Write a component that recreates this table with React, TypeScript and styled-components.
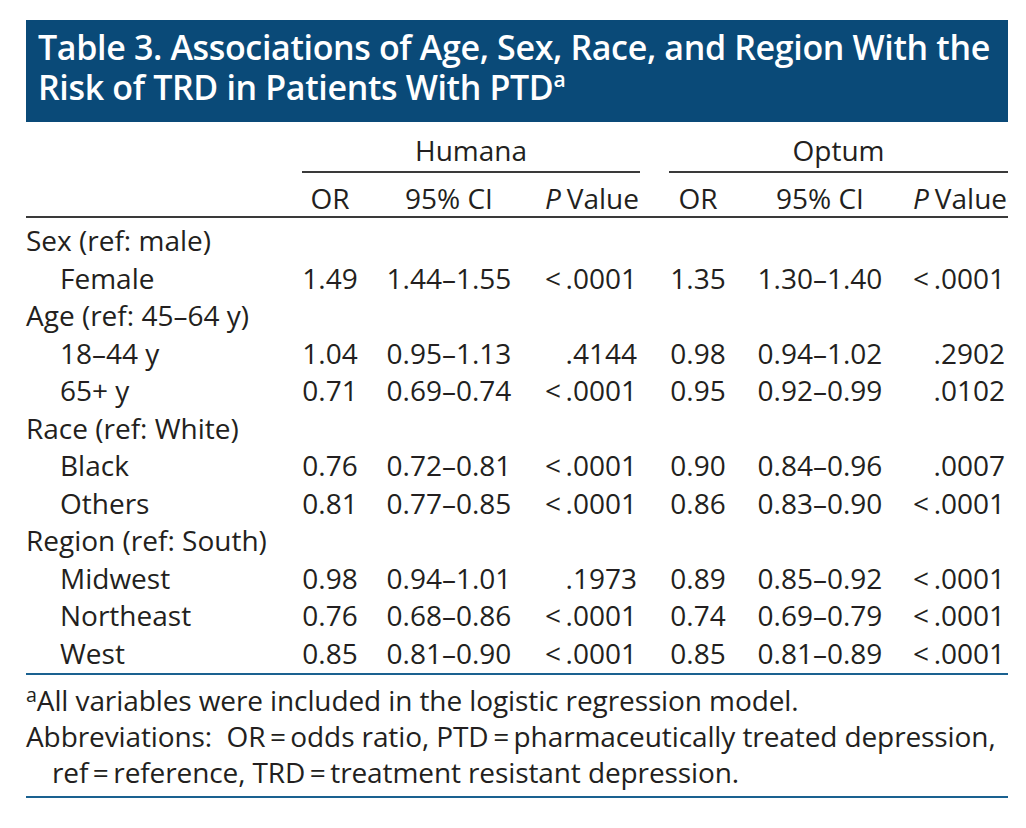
import React from "react";
import styled, { createGlobalStyle } from "styled-components";

const GlobalStyle = createGlobalStyle`
  html, body {
    margin: 0;
    padding: 0;
    background: #ffffff;
  }
  body {
    font-family: "Open Sans", "Noto Sans", "Liberation Sans", sans-serif;
    color: #231f20;
  }
`;

const COLS = "276px 56px 182px 100px 29px 58px 186px 95px";
const INK = "#231f20";
const RULE = "#3a3a3a";
const BLUE = "#1a6190";
const BODY_SIZE = "28px";

const Wrapper = styled.div`
  width: 982px;
  margin: 20px 0 0 26px;
  display: flex;
  flex-direction: column;
`;

const TitleBar = styled.div`
  background: #0a4a78;
  color: #ffffff;
  padding: 7px 0 15px 12px;
  font-weight: 600;
  font-size: 34px;
  line-height: 40px;
  letter-spacing: -0.35px;
`;

const TitleLine = styled.div`
  white-space: nowrap;
`;

const Sup = styled.sup`
  font-size: 0.62em;
  line-height: 0;
  vertical-align: 0.62em;
  font-weight: inherit;
`;

const Row = styled.div<{ $pt?: number; $rule?: boolean }>`
  display: grid;
  grid-template-columns: ${COLS};
  padding-top: ${(p) => p.$pt ?? 0}px;
  font-size: ${BODY_SIZE};
  line-height: 36px;
  color: ${INK};
  border-bottom: ${(p) => (p.$rule ? `2px solid ${RULE}` : "none")};
`;

const GroupHead = styled.div<{ $start: number }>`
  grid-column: ${(p) => p.$start} / span 3;
  text-align: center;
  padding-bottom: 3px;
  border-bottom: 2px solid ${RULE};
`;

const ColHead = styled.div<{ $col: number; $align?: "left" | "center" | "right" }>`
  grid-column: ${(p) => p.$col};
  text-align: ${(p) => p.$align ?? "center"};
  white-space: nowrap;
  padding-right: ${(p) => (p.$align === "right" ? 1 : 0)}px;
`;

const Body = styled.div`
  display: grid;
  grid-template-columns: ${COLS};
  grid-auto-rows: 37.5px;
  padding: 4px 0 1px;
  border-bottom: 2px solid ${BLUE};
  font-size: ${BODY_SIZE};
  line-height: 37.5px;
  color: ${INK};
`;

const Section = styled.div`
  grid-column: 1 / -1;
  white-space: nowrap;
`;

const Label = styled.div`
  grid-column: 1;
  padding-left: 34px;
  white-space: nowrap;
`;

const Cell = styled.div<{ $col: number; $align?: "center" | "right" }>`
  grid-column: ${(p) => p.$col};
  text-align: ${(p) => p.$align ?? "center"};
  white-space: nowrap;
  padding-right: ${(p) => (p.$align === "right" ? 3 : 0)}px;
`;

const Notes = styled.div`
  padding: 7px 0 6px;
  border-bottom: 2px solid ${BLUE};
  font-size: ${BODY_SIZE};
  line-height: 36px;
  color: ${INK};
`;

const NoteLine = styled.div<{ $hang?: boolean }>`
  padding-left: ${(p) => (p.$hang ? 26 : 0)}px;
  white-space: nowrap;
  letter-spacing: -0.1px;
`;

const NoteSup = styled.sup`
  font-size: 0.7em;
  line-height: 0;
  vertical-align: 0.45em;
`;

const Italic = styled.i`
  font-style: italic;
  margin-right: 6px;
`;

type Stat = [string, string, string];
type DataRow = { label: string; h: Stat; o: Stat };
type Group = { title: string; rows: DataRow[] };

const LT = "<\u2009.0001";

const groups: Group[] = [
  {
    title: "Sex (ref: male)",
    rows: [{ label: "Female", h: ["1.49", "1.44–1.55", LT], o: ["1.35", "1.30–1.40", LT] }],
  },
  {
    title: "Age (ref: 45–64 y)",
    rows: [
      { label: "18–44 y", h: ["1.04", "0.95–1.13", ".4144"], o: ["0.98", "0.94–1.02", ".2902"] },
      { label: "65+ y", h: ["0.71", "0.69–0.74", LT], o: ["0.95", "0.92–0.99", ".0102"] },
    ],
  },
  {
    title: "Race (ref: White)",
    rows: [
      { label: "Black", h: ["0.76", "0.72–0.81", LT], o: ["0.90", "0.84–0.96", ".0007"] },
      { label: "Others", h: ["0.81", "0.77–0.85", LT], o: ["0.86", "0.83–0.90", LT] },
    ],
  },
  {
    title: "Region (ref: South)",
    rows: [
      { label: "Midwest", h: ["0.98", "0.94–1.01", ".1973"], o: ["0.89", "0.85–0.92", LT] },
      { label: "Northeast", h: ["0.76", "0.68–0.86", LT], o: ["0.74", "0.69–0.79", LT] },
      { label: "West", h: ["0.85", "0.81–0.90", LT], o: ["0.85", "0.81–0.89", LT] },
    ],
  },
];

const EQ = "\u2009=\u2009";

export default function App() {
  return (
    <>
      <GlobalStyle />
      <Wrapper>
        <TitleBar>
          <TitleLine>Table 3. Associations of Age, Sex, Race, and Region With the</TitleLine>
          <TitleLine>
            Risk of TRD in Patients With PTD<Sup>a</Sup>
          </TitleLine>
        </TitleBar>

        <Row $pt={10}>
          <GroupHead $start={2}>Humana</GroupHead>
          <GroupHead $start={6}>Optum</GroupHead>
        </Row>

        <Row $pt={7} $rule>
          <ColHead $col={2}>OR</ColHead>
          <ColHead $col={3}>95% CI</ColHead>
          <ColHead $col={4} $align="right">
            <Italic>P</Italic>Value
          </ColHead>
          <ColHead $col={6}>OR</ColHead>
          <ColHead $col={7}>95% CI</ColHead>
          <ColHead $col={8} $align="right">
            <Italic>P</Italic>Value
          </ColHead>
        </Row>

        <Body>
          {groups.map((g) => (
            <React.Fragment key={g.title}>
              <Section>{g.title}</Section>
              {g.rows.map((r) => (
                <React.Fragment key={r.label}>
                  <Label>{r.label}</Label>
                  <Cell $col={2}>{r.h[0]}</Cell>
                  <Cell $col={3}>{r.h[1]}</Cell>
                  <Cell $col={4} $align="right">{r.h[2]}</Cell>
                  <Cell $col={6}>{r.o[0]}</Cell>
                  <Cell $col={7}>{r.o[1]}</Cell>
                  <Cell $col={8} $align="right">{r.o[2]}</Cell>
                </React.Fragment>
              ))}
            </React.Fragment>
          ))}
        </Body>

        <Notes>
          <NoteLine>
            <NoteSup>a</NoteSup>All variables were included in the logistic regression model.
          </NoteLine>
          <NoteLine>
            Abbreviations:&nbsp; OR{EQ}odds ratio, PTD{EQ}pharmaceutically treated depression,
          </NoteLine>
          <NoteLine $hang>
            ref{EQ}reference, TRD{EQ}treatment resistant depression.
          </NoteLine>
        </Notes>
      </Wrapper>
    </>
  );
}
